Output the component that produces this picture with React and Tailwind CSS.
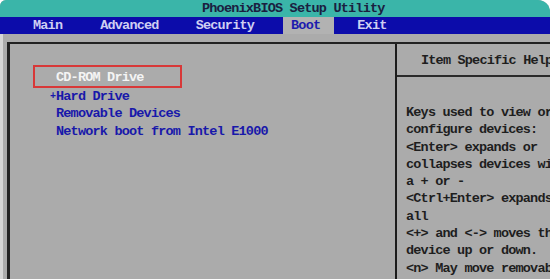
import React from 'react'

const menu = [
  { label: 'Main', cls: 'ml-[25px]' },
  { label: 'Advanced', cls: 'ml-[22px]' },
  { label: 'Security', cls: 'ml-[21px]' },
  { label: 'Boot', cls: 'ml-[21px] pr-[14px] bg-[#b2b2b2] text-[#1c1cae]', active: true },
  { label: 'Exit', cls: 'ml-[15px]' },
]

const help = [
  'Keys used to view or',
  'configure devices:',
  '<Enter> expands or',
  'collapses devices with',
  'a + or -',
  '<Ctrl+Enter> expands',
  'all',
  '<+> and <-> moves the',
  'device up or down.',
  '<n> May move removable',
]

export default function App() {
  return (
    <div className="w-[550px] h-[279px] overflow-hidden bg-white font-['Liberation_Mono',monospace] font-bold text-[13.5px] tracking-[-0.8px]">
      <div className="h-full flex flex-col rounded-tl-[6px] rounded-tr-[12px] overflow-hidden bg-[#ababab]">
        {/* Title bar */}
        <div className="h-[17px] shrink-0 bg-[#3ab5a9] text-[#1a2040] leading-[18px] pl-[202px] whitespace-nowrap">
          PhoenixBIOS Setup Utility
        </div>

        {/* Menu bar */}
        <div className="h-[17px] shrink-0 bg-[#0c0caa] flex items-stretch leading-[17px] whitespace-nowrap text-[#cfcff2]">
          {menu.map((m) => (
            <span key={m.label} className={`px-2 ${m.cls}`}>
              {m.label}
            </span>
          ))}
        </div>

        {/* Body */}
        <div className="flex-1 flex flex-col border-l-[3px] border-[#d6d6d6]">
          <div className="h-[8px] shrink-0"></div>
          <div className="flex-1 flex ml-[4px] border-l-[3px] border-t-2 border-[#222]">
            {/* Left panel */}
            <div className="w-[385px] shrink-0 flex flex-col pt-[21px] pl-[23px] leading-[17.3px] whitespace-nowrap text-[#1818aa]">
              <div className="w-[149px] h-[23px] border-2 border-[#d83838] flex items-center pl-[21px] pt-[3px] text-[#f4f4f4]">
                CD-ROM Drive
              </div>
              <div className="pl-[23px] flex">
                <span className="w-[6px] ml-[-6px] text-[10px] tracking-normal">+</span>
                <span>Hard Drive</span>
              </div>
              <div className="pl-[23px]">Removable Devices</div>
              <div className="pl-[23px]">Network boot from Intel E1000</div>
            </div>

            {/* Right panel */}
            <div className="flex-1 flex flex-col border-l-2 border-[#1c1c1c] text-[#1e1e1e] whitespace-nowrap overflow-hidden">
              <div className="h-[33px] shrink-0 flex items-center pl-[24px] pt-[4px] border-b-2 border-[#2a2a2a]">
                Item Specific Help
              </div>
              <div className="pt-[27px] pl-[9px] leading-[17.3px]">
                {help.map((line, i) => (
                  <div key={i}>{line}</div>
                ))}
              </div>
            </div>
          </div>
        </div>
      </div>
    </div>
  )
}
